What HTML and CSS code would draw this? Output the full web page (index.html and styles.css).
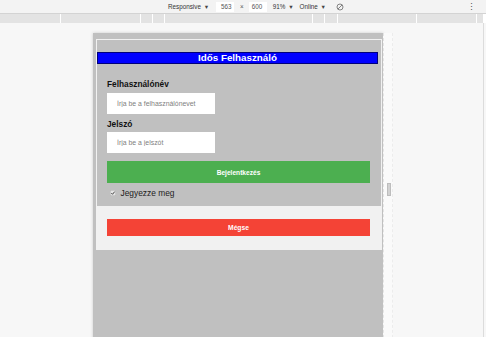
FILE: index.html
```html
<!DOCTYPE html>
<html lang="hu">
<head>
  <meta charset="UTF-8">
  <meta name="viewport" content="width=device-width, initial-scale=1.0">
  <title>Idős Felhasználó</title>
  <link rel="stylesheet" href="styles.css">
</head>
<body>
  <div class="toolbar">
    <span class="tb-item tb-mode">Responsive <span class="caret">&#9660;</span></span>
    <span class="tb-box tb-width">563</span>
    <span class="tb-times">&times;</span>
    <span class="tb-box tb-height">600</span>
    <span class="tb-item tb-zoom">91% <span class="caret">&#9660;</span></span>
    <span class="tb-item tb-net">Online <span class="caret">&#9660;</span></span>
    <svg class="tb-rotate" width="8" height="8" viewBox="0 0 8 8">
      <circle cx="4" cy="4" r="3" fill="none" stroke="#777" stroke-width="0.9"/>
      <path d="M2 6 L6 2" stroke="#777" stroke-width="0.9"/>
    </svg>
    <span class="tb-kebab">&#8942;</span>
  </div>

  <div class="ruler">
    <span style="width:60px"></span>
    <span style="width:79px"></span>
    <span style="width:11px"></span>
    <span style="width:11px"></span>
    <span style="width:147px"></span>
    <span style="width:11px"></span>
    <span style="width:12px"></span>
    <span style="width:78px"></span>
    <span style="width:59px"></span>
    <span style="width:6px"></span>
  </div>

  <div class="stage">
    <div class="device">
      <div class="container">
        <div class="panel">
          <h2 class="title">Idős Felhasználó</h2>
          <div class="fields">
            <label class="field-label" for="uname">Felhasználónév</label>
            <input class="field-input" id="uname" type="text" placeholder="Írja be a felhasználónevet">
            <label class="field-label second" for="psw">Jelszó</label>
            <input class="field-input second" id="psw" type="password" placeholder="Írja be a jelszót">
            <button class="btn btn-login" type="button">Bejelentkezés</button>
            <div class="remember">
              <svg class="check" width="6" height="6" viewBox="0 0 6 6">
                <rect x="0.25" y="0.25" width="5.5" height="5.5" fill="#e6e6e6" stroke="#b5b5b5" stroke-width="0.5"/>
                <path d="M1.3 3.1 L2.5 4.3 L4.7 1.6" fill="none" stroke="#333" stroke-width="0.9"/>
              </svg>
              <span>Jegyezze meg</span>
            </div>
          </div>
        </div>
        <div class="cancel-area">
          <button class="btn btn-cancel" type="button">Mégse</button>
        </div>
      </div>
    </div>
    <div class="handle-col"><span class="handle"></span></div>
  </div>
</body>
</html>
```

FILE: styles.css
```css
* { margin: 0; padding: 0; box-sizing: border-box; }
body {
  width: 486px;
  height: 337px;
  overflow: hidden;
  background-color: #f7f7f7;
  font-family: 'Liberation Sans', Arial, sans-serif;
}

/* devtools toolbar */
.toolbar {
  height: 14px;
  display: flex;
  align-items: center;
  background-color: #f3f3f3;
  border-bottom: 1px solid #d3d3d3;
  font-size: 6.3px;
  color: #333;
  padding-left: 168px;
}
.caret { font-size: 5.5px; margin-left: 1px; color: #444; }
.tb-box {
  background: #fff;
  height: 10px;
  line-height: 10px;
  padding: 0 3px;
  color: #555;
}
.tb-width { margin-left: 7px; width: 18px; padding-left: 5px; }
.tb-times { margin-left: 6px; color: #555; }
.tb-height { margin-left: 5px; width: 18px; }
.tb-zoom { margin-left: 6px; }
.tb-net { margin-left: 6px; }
.tb-rotate { margin-left: 10px; }
.tb-kebab { margin-left: auto; margin-right: 10px; font-size: 9px; color: #555; }

.ruler {
  height: 9px;
  display: flex;
  gap: 1px;
  background: #fff;
}
.ruler span { background: #e3e3e3; height: 100%; }

/* emulated viewport */
.stage {
  display: flex;
  align-items: flex-start;
  height: 314px;
  padding: 10px 0 0 93px;
  border-right: 1px solid #dcdcdc;
  width: 484px;
}
.device {
  width: 290px;
  height: 320px;
  background-color: #c0c0c0;
  box-shadow: 0 0 3px rgba(0, 0, 0, 0.18);
  padding: 6px 1px 0 3px;
}
.handle-col {
  width: 10px;
  height: 320px;
  border-left: 1px dashed #e4e4e4;
  border-right: 1px dashed #ececec;
  background: #fafafa;
  padding: 150px 0 0 3px;
}
.handle {
  display: block;
  width: 4px;
  height: 13px;
  background: #d2d2d2;
  border: 1px solid #bdbdbd;
}

/* the page itself */
.container {
  border: 1px solid #f1f1f1;
  background-color: #f1f1f1;
}
.panel {
  background-color: #c0c0c0;
  padding: 12px 0 8px;
}
.title {
  height: 12px;
  margin-right: 3px;
  background-color: #0000ff;
  border: 1px solid #00007a;
  color: #fff;
  font-size: 9.8px;
  line-height: 10px;
  font-weight: bold;
  text-align: center;
}
.fields { padding: 15px 11px 0 10px; }
.field-label {
  display: block;
  font-size: 8.3px;
  line-height: 10px;
  font-weight: bold;
  color: #111;
}
.field-label.second { margin-top: 5px; }
.field-input {
  display: block;
  width: 108px;
  height: 21px;
  margin-top: 4px;
  border: none;
  background: #fff;
  padding-left: 10px;
  font-family: 'Liberation Sans', Arial, sans-serif;
  font-size: 6.9px;
  color: #333;
}
.field-input.second { margin-top: 3px; }
.field-input::placeholder { color: #808080; }

.btn {
  display: block;
  width: 100%;
  border: none;
  color: #fff;
  font-family: 'Liberation Sans', Arial, sans-serif;
  font-weight: bold;
  text-align: center;
}
.btn-login {
  height: 22px;
  margin-top: 8px;
  background-color: #4caf50;
  font-size: 6.6px;
}
.remember {
  display: flex;
  align-items: center;
  height: 11px;
  margin-top: 4px;
  font-size: 8.4px;
  color: #222;
}
.check { margin: 0 5px 0 2.5px; }

.cancel-area { padding: 13px 11px 13px 10px; }
.btn-cancel {
  height: 17px;
  background-color: #f44336;
  font-size: 6.7px;
}
```
